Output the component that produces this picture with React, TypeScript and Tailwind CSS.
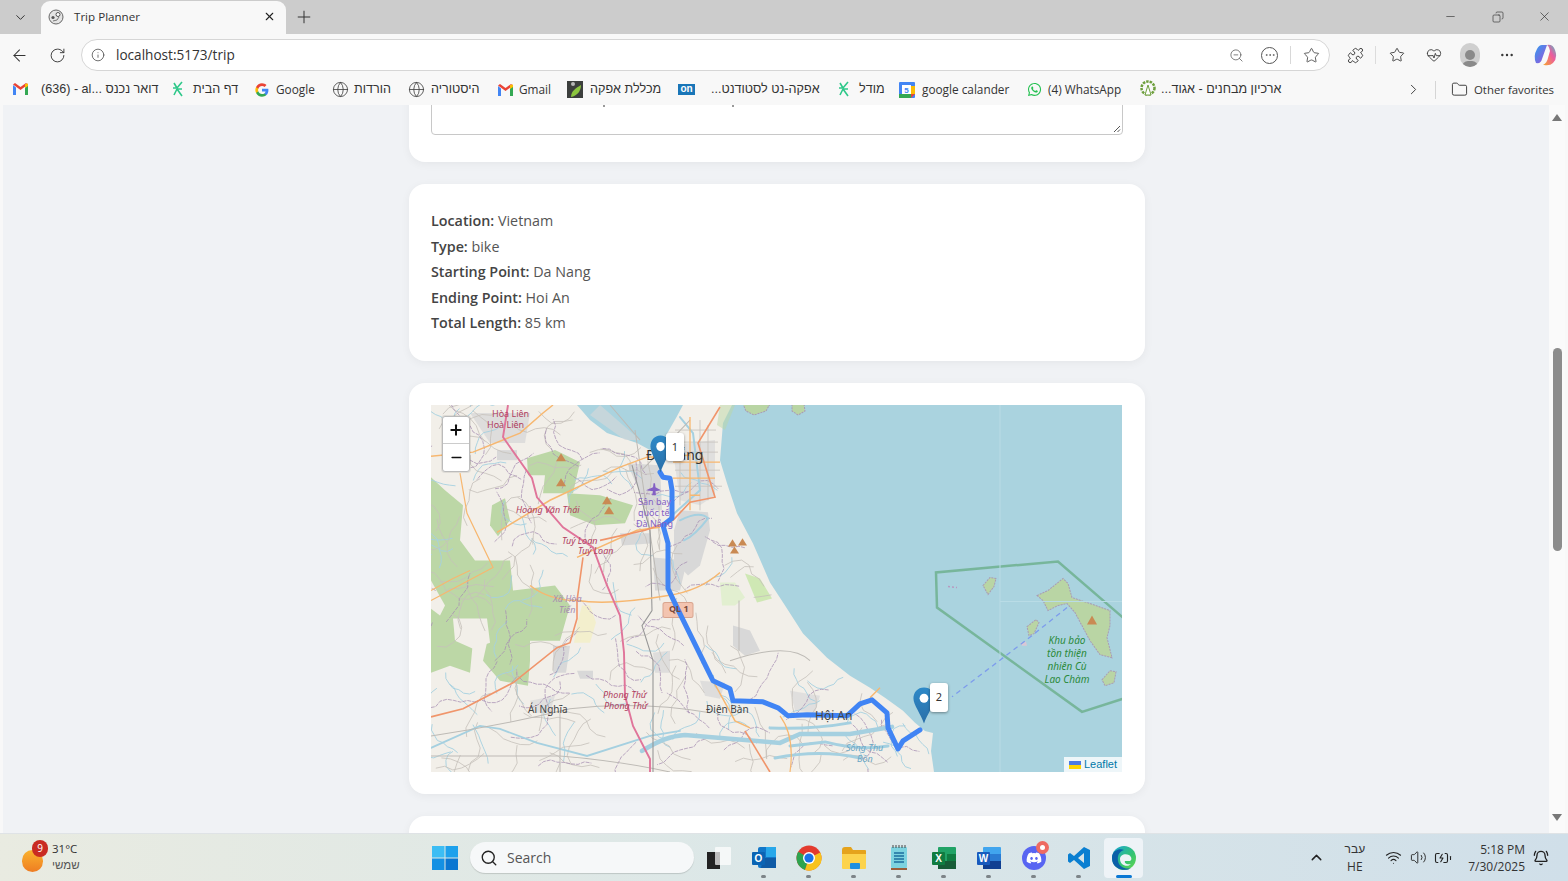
import React from "react";
import { FaWhatsapp, FaDiscord } from "react-icons/fa";
import { Search, ChevronDown, ChevronUp, ChevronRight, ArrowLeft, RotateCw, Info, Plus, X, Minus, Copy, ZoomOut, Star, Puzzle, HeartPulse, Ellipsis, Folder, Globe, Wifi, Volume2, BatteryCharging, BellRing } from "lucide-react";

const Gmail = () => (
  <svg width="15" height="12" viewBox="0 0 15 12" className="shrink-0">
    <path d="M0 2 V12 H3 V4.5 Z" fill="#4285f4" />
    <path d="M12 4.5 V12 H15 V2 Z" fill="#34a853" />
    <path d="M0 1.5 L7.5 7 L15 1.5 L13 0 L7.5 4 L2 0 Z" fill="#ea4335" />
    <path d="M12 1 L15 0.5 V3 L12 5 Z" fill="#fbbc04" />
  </svg>
);
const Moodle = () => (
  <svg width="14" height="16" viewBox="0 0 14 16" className="shrink-0" fill="none" stroke="#2fc88a" strokeWidth="1.6">
    <path d="M11 1 L6 7 H2 M6 8 H11 M6 8 L11 15 M6 8 L3 14 M3 2 L6 7" />
  </svg>
);
const GoogleG = () => (
  <svg width="14" height="14" viewBox="0 0 24 24" className="shrink-0">
    <path d="M23 12.3c0-.8-.1-1.6-.2-2.3H12v4.5h6.2c-.3 1.4-1.1 2.6-2.3 3.4v2.8h3.7c2.1-2 3.4-4.9 3.4-8.4z" fill="#4285f4" />
    <path d="M12 23.5c3.1 0 5.7-1 7.6-2.8l-3.7-2.8c-1 .7-2.3 1.1-3.9 1.1-3 0-5.5-2-6.4-4.7H1.8v2.9c1.9 3.8 5.8 6.3 10.2 6.3z" fill="#34a853" />
    <path d="M5.6 14.3c-.5-1.4-.5-3 0-4.5V6.9H1.8c-1.6 3.2-1.6 6.9 0 10.3z" fill="#fbbc04" />
    <path d="M12 5.1c1.7 0 3.2.6 4.4 1.7l3.3-3.3C17.7 1.7 15.1.5 12 .5 7.6.5 3.7 3 1.8 6.9l3.8 2.9C6.5 7.1 9 5.1 12 5.1z" fill="#ea4335" />
  </svg>
);
const Afeka = () => (
  <svg width="16" height="17" viewBox="0 0 16 17" className="shrink-0">
    <rect width="16" height="17" fill="#3c3f3d" />
    <circle cx="6" cy="3" r="2" fill="#b8b8b8" />
    <path d="M4 16 C4 10 9 7 14 4 C14 10 10 15 4 16 Z" fill="#8cc63f" />
  </svg>
);
const OnBadge = () => (
  <span className="flex h-[11px] w-[17px] shrink-0 items-center justify-center bg-[#1976b8] font-['Liberation_Sans',sans-serif] text-[10px] leading-none font-bold text-white">on</span>
);
const Cal = () => (
  <svg width="16" height="16" viewBox="0 0 16 16" className="shrink-0">
    <rect width="16" height="16" rx="1" fill="#4285f4" />
    <rect x="0" y="12" width="12" height="4" fill="#34a853" />
    <path d="M12 12 H16 L12 16 Z" fill="#ea4335" />
    <rect x="12" y="4" width="4" height="8" fill="#fbbc04" />
    <rect x="3" y="3" width="9" height="9" fill="#fff" />
    <text x="7.5" y="10.5" fontSize="8" fontWeight="700" textAnchor="middle" fill="#4285f4" fontFamily="Liberation Sans">5</text>
  </svg>
);
const Archive = () => (
  <svg width="16" height="18" viewBox="0 0 16 18" className="shrink-0">
    <circle cx="8" cy="8" r="6.5" fill="none" stroke="#6e9f3d" strokeWidth="2.5" strokeDasharray="2.5 1" />
    <path d="M8 5 L11 15 H5 Z" fill="#fff" stroke="#6e9f3d" strokeWidth="1" />
  </svg>
);

const Bm = ({ icon, text, cls, tcls, rtl }: { icon: React.ReactNode; text: string; cls: string; tcls: string; rtl?: boolean }) => (
  <div className={"flex shrink-0 items-center " + cls}>
    {icon}
    <span dir={rtl ? "rtl" : "ltr"} className={"whitespace-nowrap " + (rtl ? "font-['Liberation_Sans',sans-serif] text-[12.6px] " : "") + tcls}>{text}</span>
  </div>
);

const FIcon = () => <Globe size={17} strokeWidth={1.2} className="shrink-0 text-[#444]" />;

const Bookmarks = () => (
  <div className="flex h-[29px] shrink-0 items-center bg-[#f8f8f8] pb-[2px] pl-[13px] text-[11.8px] text-[#333]">
    <Bm cls="w-[158px]" tcls="ml-[13px]" rtl icon={<Gmail />} text={"דואר נכנס ...al\u200F - (636)"} />
    <Bm cls="w-[84px]" tcls="ml-[8px]" rtl icon={<Moodle />} text="דף הבית" />
    <Bm cls="w-[77px]" tcls="ml-[7px]" icon={<GoogleG />} text="Google" />
    <Bm cls="w-[76px]" tcls="ml-[5px]" rtl icon={<FIcon />} text="הורדות" />
    <Bm cls="w-[90px]" tcls="ml-[6px]" rtl icon={<FIcon />} text="היסטוריה" />
    <Bm cls="w-[69px]" tcls="ml-[6px]" icon={<Gmail />} text="Gmail" />
    <Bm cls="w-[111px]" tcls="ml-[7px]" rtl icon={<Afeka />} text="מכללת אפקה" />
    <Bm cls="w-[159px]" tcls="ml-[16px]" rtl icon={<OnBadge />} text="אפקה-נט לסטודנט..." />
    <Bm cls="w-[62px]" tcls="ml-[8px]" rtl icon={<Moodle />} text="מודל" />
    <Bm cls="w-[128px]" tcls="ml-[7px]" icon={<Cal />} text="google calander" />
    <Bm cls="w-[113px]" tcls="ml-[6px]" icon={<FaWhatsapp size={15} className="shrink-0 text-[#25c152]" />} text="(4) WhatsApp" />
    <Bm cls="w-[265px]" tcls="ml-[5px]" rtl icon={<Archive />} text="ארכיון מבחנים - אגוד..." />
    <ChevronRight size={17} strokeWidth={1.3} className="shrink-0 text-[#333]" />
    <div className="ml-[13px] h-[18px] w-px shrink-0 bg-[#d5d5d5]" />
    <Folder size={17} strokeWidth={1.3} className="ml-[15px] shrink-0 text-[#333]" />
    <span className="ml-[6px] whitespace-nowrap text-[11.4px]">Other favorites</span>
  </div>
);

const TabStrip = () => (
  <div className="flex h-[34px] shrink-0 items-end bg-[#cccccc]">
    <div className="flex h-[33px] w-[41px] items-center justify-center">
      <ChevronDown size={15} strokeWidth={1.6} className="text-[#333]" />
    </div>
    <div className="flex h-[33px] w-[245px] items-center rounded-t-[9px] bg-[#f8f8f8] pb-[2px] pl-[7px] pr-[10px]">
      <svg width="16" height="16" viewBox="0 0 16 16" className="shrink-0">
        <circle cx="8" cy="8" r="7" fill="#e4e4e4" stroke="#666" strokeWidth="1" />
        <circle cx="10" cy="5.5" r="2" fill="#fff" stroke="#555" strokeWidth="1" />
        <circle cx="5" cy="8.5" r="1.6" fill="#555" />
        <path d="M5 12 Q10 12 11 8" fill="none" stroke="#777" strokeWidth="1" />
      </svg>
      <span className="ml-[10px] text-[11.6px] text-[#333]">Trip Planner</span>
      <X size={13} strokeWidth={2} className="ml-auto text-[#222]" />
    </div>
    <div className="flex h-[33px] w-[36px] items-center justify-center pb-[2px]">
      <Plus size={20} strokeWidth={1.2} className="text-[#333]" />
    </div>
    <div className="ml-auto flex h-[33px] items-center pb-[2px]">
      <div className="flex w-[48px] justify-center"><Minus size={13} strokeWidth={1.2} className="text-[#333]" /></div>
      <div className="flex w-[47px] justify-center"><Copy size={12} strokeWidth={1.3} className="-scale-x-100 text-[#333]" /></div>
      <div className="flex w-[47px] justify-center"><X size={15} strokeWidth={1.1} className="text-[#333]" /></div>
    </div>
  </div>
);

const Toolbar = () => (
  <div className="flex h-[42px] shrink-0 items-center bg-[#f8f8f8]">
    <div className="flex w-[39px] justify-center"><ArrowLeft size={19} strokeWidth={1.3} className="text-[#333]" /></div>
    <div className="flex w-[36px] justify-center"><RotateCw size={17} strokeWidth={1.3} className="text-[#333]" /></div>
    <div className="ml-[6px] flex h-[32px] w-[1249px] items-center rounded-full border border-[#d6d6d6] bg-white pl-[9px] pr-[9px]">
      <Info size={14} strokeWidth={1.3} className="text-[#444]" />
      <span className="ml-[11px] text-[13.6px] text-[#333]">localhost:5173/trip</span>
      <ZoomOut size={15} strokeWidth={1.2} className="ml-auto text-[#555]" />
      <div className="ml-[17px] flex h-[17px] w-[17px] items-center justify-center rounded-full border border-[#555]">
        <Ellipsis size={12} strokeWidth={1.5} className="text-[#555]" />
      </div>
      <div className="ml-[12px] h-[18px] w-px bg-[#d8d8d8]" />
      <Star size={17} strokeWidth={1.2} className="ml-[12px] text-[#444]" />
    </div>
    <Puzzle size={17} strokeWidth={1.3} className="ml-[17px] text-[#333]" />
    <div className="ml-[11px] h-[18px] w-px bg-[#dcdcdc]" />
    <Star size={16} strokeWidth={1.3} className="ml-[13px] text-[#333]" />
    <HeartPulse size={16} strokeWidth={1.3} className="ml-[21px] text-[#333]" />
    <div className="ml-[18px] flex h-[24px] w-[20px] items-end justify-center overflow-hidden rounded-full bg-[#cfcfcf]">
      <div className="flex flex-col items-center">
        <div className="mb-[1px] h-[10px] w-[10px] rounded-full bg-[#8a8a8a]" />
        <div className="h-[6px] w-[16px] rounded-t-full bg-[#8a8a8a]" />
      </div>
    </div>
    <Ellipsis size={16} strokeWidth={1.6} className="ml-[19px] text-[#333]" />
    <svg width="24" height="24" viewBox="0 0 24 24" className="ml-[18px]">
      <defs>
        <linearGradient id="cp1" x1="0" y1="0" x2="1" y2="1"><stop offset="0" stopColor="#2f9df0" /><stop offset="1" stopColor="#a24fd8" /></linearGradient>
        <linearGradient id="cp2" x1="0" y1="1" x2="1" y2="0"><stop offset="0" stopColor="#f6a72c" /><stop offset="0.6" stopColor="#ec5aa0" /><stop offset="1" stopColor="#49c2c4" /></linearGradient>
      </defs>
      <path d="M9 2 H14 L9 16 Q8 21 3 20 Q0 13 4 6 Q6 2 9 2 Z" fill="url(#cp1)" />
      <path d="M14 2 Q20 1 22 7 Q25 15 20 20 Q17 23 11 22 L10 22 Q14 20 15 15 L17 8 Q16 3 14 2 Z" fill="url(#cp2)" />
    </svg>
  </div>
);

const coastPts: [number, number][] = [[405, 577], [433, 607], [443, 637], [450, 650], [470, 722], [483, 727], [528, 743], [582, 770], [633, 803], [657, 827], [687, 870], [710, 903], [730, 930], [771, 934]];
const coastX = (y: number) => {
  for (let i = 1; i < coastPts.length; i++) {
    const [y0, x0] = coastPts[i - 1];
    const [y1, x1] = coastPts[i];
    if (y <= y1) return x0 + ((y - y0) / (y1 - y0)) * (x1 - x0);
  }
  return 934;
};
const wiggles = (n: number, seed: number, segs: number, step: number) => {
  let s = seed;
  const r = () => {
    s = (s * 16807) % 2147483647;
    return (s - 1) / 2147483646;
  };
  const out: string[] = [];
  for (let i = 0; i < n; i++) {
    let x = 431 + r() * 500;
    let y = 405 + r() * 366;
    let a = r() * 6.28;
    let d = "";
    for (let j = 0; j < segs; j++) {
      if (x > coastX(y) - 3) break;
      d += (j === 0 ? "M" : "L") + x.toFixed(1) + " " + y.toFixed(1) + " ";
      a += (r() - 0.5) * 1.5;
      x += Math.cos(a) * step;
      y += Math.sin(a) * step;
    }
    if (d.includes("L")) out.push(d);
  }
  return out.join("");
};
const grayNet = wiggles(150, 7331, 7, 9);
const purpleNet = wiggles(75, 91177, 9, 7);
const blueNet = wiggles(85, 50021, 8, 6);

const MapArt = () => (
  <svg viewBox="431 405 691 366" preserveAspectRatio="none" className="absolute inset-0 h-full w-full">
    <defs>
      <filter id="bl" x="0" y="0" width="100%" height="100%"><feGaussianBlur stdDeviation="0.4" /></filter>
    </defs>
    <g filter="url(#bl)">
      <rect x="431" y="405" width="691" height="366" fill="#aad3df" />
      {/* mainland */}
      <path fill="#f2efe9" d="M431 405 H577 L590 420 L607 433 L637 443 L650 450 L662 443 L668 432 L676 418 L683 405 H732 L723 423 L720 460 L727 483 L737 513 L753 543 L770 582 L785 605 L803 633 L827 657 L850 675 L870 687 L885 697 L903 710 L915 722 L925 730 L933 732 L931 750 L934 771 H431 Z" />
      {/* islands */}
      <g fill="#b9d5a4" stroke="#a99bb5" strokeWidth="1" strokeDasharray="2 1">
        <path d="M1037 595 L1048 590 L1063 578 L1068 583 L1072 597 L1090 603 L1110 610 L1110 625 L1107 637 L1112 657 L1100 654 L1090 640 L1083 627 L1075 612 L1067 603 L1058 605 L1048 610 L1043 600 Z" />
        <path d="M983 585 L990 577 L996 578 L994 586 L988 594 Z" />
        <path d="M1027 626 L1036 619 L1039 622 L1034 633 L1029 635 Z" />
        <path d="M1102 679 L1110 670 L1116 671 L1114 682 L1105 685 Z" />
        <path d="M792 404 L804 404 L805 411 L798 415 L792 411 Z" />
        <path d="M743 404 H770 L766 411 L754 415 L746 411 Z" />
      </g>
      <path d="M1020 642 L1026 641 L1027 645 L1022 645 Z" fill="#d9c8d6" />
      <path d="M948 586 L957 587" stroke="#b79ac0" strokeWidth="1.5" strokeDasharray="2 2" />
      {/* protected area */}
      <path d="M1123 617 L1058 561 L936 572 L937 607 L1082 711 L1123 698" fill="none" stroke="#6fb08f" strokeWidth="2.5" opacity="0.85" />
      <path d="M1000 405 V771" stroke="#b9dce6" strokeWidth="1" />
      <path d="M1000 601 H1122" stroke="#b9dce6" strokeWidth="1" />
      <path d="M1067 607 L1032 635 L994 664 L952 696" fill="none" stroke="#7d9cec" strokeWidth="1.3" strokeDasharray="5 4" />
      <path d="M1087 624 H1097 L1092 615 Z" fill="#c98a52" />
      {/* green forests */}
      <g fill="#bcd7a6">
        <path d="M431 477 L445 490 L463 505 L460 540 L475 560 L510 560 L513 590 L555 585 L570 605 L560 640 L530 640 L530 660 L528 685 L500 680 L483 660 L487 642 L453 620 L473 640 L470 672 L450 665 L431 672 Z" />
        <path d="M527 458 L555 450 L580 462 L573 493 L543 493 L545 475 L528 475 Z" />
        <path d="M567 493 L600 495 L633 505 L625 523 L595 525 L570 515 Z" />
        <path d="M492 505 L505 498 L510 520 L498 536 L490 525 Z" />
        <path d="M720 405 L735 405 L725 430 L717 425 Z" opacity="0.5" />
      </g>
      <path d="M453 618 L487 618 L490 642 L473 648 L455 640 Z" fill="#f2efe9" />
      <path d="M420 600 L431 580 L445 605 L440 615 Z" fill="#f2efe9" />
      <path d="M720 582 H735 L745 597 L735 605 H722 Z" fill="#e2efd0" />
      <path d="M745 573 L760 578 L772 598 L757 602 Z" fill="#cfe8b4" />
      <path d="M582 605 L590 605 L596 622 L590 642 L574 642 L578 620 Z" fill="#f3efcd" />
      {/* urban */}
      <g fill="#d8d8d8">
        <path d="M627 463 L660 465 L662 510 L648 510 Z" />
        <path d="M672 445 L715 440 L715 495 L700 505 L680 500 Z" opacity="0.7" />
        <path d="M680 510 L708 512 L710 530 L700 565 L688 575 L674 560 L674 530 Z" />
        <path d="M653 557 L687 560 L680 590 L655 590 Z" />
        <path d="M620 533 L650 533 L650 543 L622 545 Z" />
        <path d="M733 625 L750 630 L760 650 L745 655 L733 645 Z" />
        <path d="M553 645 L570 645 L566 672 L553 672 Z" />
        <path d="M577 670 L593 670 L593 678 L580 678 Z" />
        <path d="M653 652 L670 650 L670 672 L655 672 Z" opacity="0.8" />
        <path d="M470 413 L530 413 L525 443 L490 443 Z" opacity="0.8" />
        <path d="M497 450 L517 450 L517 460 L497 460 Z" />
        <path d="M530 700 L555 695 L550 712 L535 712 Z" opacity="0.7" />
        <path d="M700 680 L725 682 L720 698 L705 695 Z" opacity="0.8" />
        <path d="M790 690 L820 695 L815 712 L795 710 Z" opacity="0.7" />
        <path d="M600 405 L640 440 L625 440 L590 415 Z" opacity="0.6" />
      </g>
      {/* texture */}
      <path d={blueNet} fill="none" stroke="#a5d0e0" strokeWidth="0.9" />
      <path d={grayNet} fill="none" stroke="#c5c1ba" strokeWidth="0.8" />
      <path d={purpleNet} fill="none" stroke="#a78fb3" strokeWidth="0.9" strokeDasharray="4 1" opacity="0.85" />
      <path d="M675 430 H716 M675 442 H718 M675 452 H718 M675 470 H720 M675 486 H722 M700 420 V510 M708 425 V500 M680 440 V505" fill="none" stroke="#c5c1ba" strokeWidth="0.8" />
      {/* rivers */}
      <g fill="none" stroke="#a5d0e0" strokeLinecap="round">
        <path d="M431 747 L480 725 L500 728 L537 742 L587 755 L650 735 L680 730" strokeWidth="1.8" />
        <path d="M642 750 Q665 735 685 734 L780 742 L800 733 L850 733 L892 726" strokeWidth="4.5" />
        <path d="M770 727 Q810 729 850 722 M790 745 L825 741 Q860 750 888 745 M775 757 Q820 748 860 757" strokeWidth="3" />
        <path d="M680 417 L693 433 L700 490 L670 517" strokeWidth="2" />
        <path d="M680 520 Q700 510 708 518 Q695 535 684 540" strokeWidth="2" />
      </g>
      {/* gray roads */}
      <g fill="none" stroke="#bdbab5" strokeWidth="1">
        <path d="M431 735 Q500 725 570 708 Q640 700 710 712 M560 710 V771 M739 600 V650 M730 660 Q790 640 810 660" />
        <path d="M635 430 L660 600 M642 470 L690 420 M610 405 L640 440 M431 755 H560 Q620 760 670 771" />
      </g>
      <path d="M632 465 L650 530 L652 610 L642 625 L653 660 L653 771" fill="none" stroke="#979797" strokeWidth="1.1" />
      {/* orange roads */}
      <g fill="none" stroke="#f7b76f" strokeWidth="1.5">
        <path d="M553 405 L543 413 L520 433 L473 452 L431 456" />
        <path d="M460 473 L467 513 L493 567 L431 600" strokeWidth="1.2" />
        <path d="M497 532 L550 500 L620 467 L647 457 L690 455" />
        <path d="M577 557 L637 530 L660 527" />
        <path d="M431 590 L453 578 L470 570" strokeWidth="1.2" />
        <path d="M530 585 Q550 600 577 600 Q610 605 668 595 Q700 590 720 572" />
        <path d="M690 417 L690 510 M673 462 H720 M673 478 H715 M690 495 H700" strokeWidth="1.3" />
        <path d="M713 680 L735 720 L750 727" />
        <path d="M780 715 Q795 735 790 771" strokeWidth="1.2" />
        <path d="M880 687 L870 697" />
      </g>
      <g fill="none" stroke="#f0956b" strokeWidth="1.6">
        <path d="M583 557 L577 600 L577 618 L570 642 L557 647 L513 682 L463 708 L431 716" />
        <path d="M720 407 L698 443 L715 497 L690 502 L673 520 L645 530 L600 540" />
        <path d="M745 730 L770 771" />
      </g>
      {/* pink trunk */}
      <path d="M508 405 L503 437 L532 478 L537 497 L563 527 L593 547 L607 585 L620 615 L624 652 L625 695 L633 725 L650 758 L650 771" fill="none" stroke="#e0749a" strokeWidth="1.9" />
      {/* peaks */}
      <g fill="#c98a52">
        <path d="M556 461 H566 L561 453 Z" /><path d="M556 486 H566 L561 478 Z" />
        <path d="M602 504 H612 L607 496 Z" /><path d="M604 514 H614 L609 506 Z" />
        <path d="M728 546 H737 L732.5 539 Z" /><path d="M738 545 H747 L742.5 538 Z" /><path d="M730 553 H739 L734.5 546 Z" />
      </g>
      <path d="M652 495 L653 491 L646 490 L653 487 L653.5 483 L655 483 L655.5 487 L661 490 L655.5 491 L656 495 Z" fill="#8461c4" />
      {/* QL badge */}
      <rect x="663" y="602" width="30" height="15" rx="2" fill="#f3c4b0" stroke="#d9a58f" />
      {/* route */}
      <path d="M660 472 L663 477 L670 478 L672 490 L672 518 L663 525 L668 543 L668 588 L677 607 L707 668 L713 680 L730 688 L733 700 L763 701 L778 707 L788 715 L807 714 L847 715 L860 703 L872 699 L887 712 L888 727 L898 748 L903 740 L920 729" fill="none" stroke="#3f84f4" strokeWidth="5" strokeLinejoin="round" strokeLinecap="round" />
    </g>
  </svg>
);

const Label = ({ cls, children }: { cls: string; children: React.ReactNode }) => (
  <span className={"absolute whitespace-nowrap leading-none " + cls}>{children}</span>
);

const Pin = ({ cls }: { cls: string }) => (
  <svg viewBox="0 0 25 41" preserveAspectRatio="none" className={"absolute " + cls}>
    <defs>
      <linearGradient id="pinG" x1="0" y1="0" x2="0" y2="1"><stop offset="0" stopColor="#2e89c8" /><stop offset="1" stopColor="#2a6fa8" /></linearGradient>
    </defs>
    <path d="M12.5 0.5 C5 0.5 0.5 6 0.5 12.5 C0.5 20 9 30 12.5 40.5 C16 30 24.5 20 24.5 12.5 C24.5 6 20 0.5 12.5 0.5 Z" fill="url(#pinG)" />
    <circle cx="12.5" cy="12.5" r="5" fill="#fff" />
  </svg>
);

const Tip = ({ cls, n }: { cls: string; n: string }) => (
  <div className={"absolute flex items-center justify-center rounded-[3px] bg-white text-[11px] text-[#333] shadow-[0_1px_3px_rgba(0,0,0,0.4)] " + cls}>{n}</div>
);

const MapView = () => (
  <div className="relative h-[367px] w-[691px] overflow-hidden bg-[#aad3df] font-['Noto_Sans','Liberation_Sans',sans-serif]">
    <MapArt />
    <Label cls="left-[61px] top-[4px] text-[9px] text-[#b0405f]">Hòa Liên</Label>
    <Label cls="left-[56px] top-[15px] text-[9px] text-[#b0405f]">Hoà Liên</Label>
    <Label cls="left-[85px] top-[100px] text-[9px] italic text-[#b0405f]">Hoàng Văn Thái</Label>
    <Label cls="left-[131px] top-[131px] text-[9px] italic text-[#b0405f]">Tuý Loan</Label>
    <Label cls="left-[147px] top-[141px] text-[9px] italic text-[#b0405f]">Tuý Loan</Label>
    <Label cls="left-[122px] top-[189px] text-[9px] italic text-[#a78ab0]">Xã Hòa</Label>
    <Label cls="left-[128px] top-[200px] text-[9px] italic text-[#a78ab0]">Tiến</Label>
    <Label cls="left-[172px] top-[285px] text-[9px] italic text-[#b0405f]">Phong Thử</Label>
    <Label cls="left-[173px] top-[296px] text-[9px] italic text-[#b0405f]">Phong Thử</Label>
    <Label cls="left-[97px] top-[299px] text-[10px] text-[#444]">Ái Nghĩa</Label>
    <Label cls="left-[275px] top-[299px] text-[10px] text-[#444]">Điện Bàn</Label>
    <Label cls="left-[384px] top-[305px] text-[12px] text-[#444]">Hội An</Label>
    <Label cls="left-[415px] top-[338px] text-[9px] italic text-[#6aa6c4]">Sông Thu</Label>
    <Label cls="left-[426px] top-[349px] text-[9px] italic text-[#6aa6c4]">Bồn</Label>
    <Label cls="left-[207px] top-[92px] text-[9px] text-[#8461c4]">Sân bay</Label>
    <Label cls="left-[207px] top-[103px] text-[9px] text-[#8461c4]">quốc tế</Label>
    <Label cls="left-[205px] top-[114px] text-[9px] text-[#8461c4]">Đà Nẵng</Label>
    <Label cls="left-[238px] top-[199px] text-[9px] font-bold text-[#7b4a3a]">QL 1</Label>
    <Label cls="left-[215px] top-[43px] text-[14px] text-[#333]">Đà Nẵng</Label>
    <div className="absolute left-[606px] top-[229px] w-[60px] text-center text-[10px] italic leading-[13px] text-[#2a8a3a]">Khu bảo<br />tồn thiện<br />nhiên Cù<br />Lao Chàm</div>
    <Pin cls="left-[219px] top-[30px] h-[38px] w-[21px]" />
    <Tip cls="left-[235px] top-[28px] h-[28px] w-[18px]" n="1" />
    <Pin cls="left-[482px] top-[282px] h-[37px] w-[22px]" />
    <Tip cls="left-[499px] top-[278px] h-[29px] w-[18px]" n="2" />
    <div className="absolute left-[11px] top-[11px] flex w-[28px] flex-col overflow-hidden rounded-[3px] border border-[#bbb] bg-white text-[#111] shadow-[0_0_0_1px_rgba(0,0,0,0.08)]">
      <div className="flex h-[27px] items-center justify-center border-b border-[#ccc]"><Plus size={16} strokeWidth={3} /></div>
      <div className="flex h-[27px] items-center justify-center"><Minus size={15} strokeWidth={2.4} /></div>
    </div>
    <div className="absolute bottom-0 right-0 flex h-[15px] items-center bg-white/80 px-[5px] font-['Liberation_Sans',sans-serif] text-[11px] text-[#0078a8]">
      <svg width="12" height="8" viewBox="0 0 12 8" className="mr-[3px]"><rect width="12" height="4" fill="#4c7be1" /><rect y="4" width="12" height="4" fill="#ffd500" /></svg>
      Leaflet
    </div>
  </div>
);

const Card = ({ cls, children }: { cls: string; children: React.ReactNode }) => (
  <div className={"w-[736px] shrink-0 rounded-[16px] bg-white shadow-[0_2px_10px_rgba(0,0,0,0.05)] " + cls}>{children}</div>
);

const Row = ({ k, v }: { k: string; v: string }) => (
  <p className="h-[25.6px]"><b className="font-semibold text-[#444]">{k}</b> <span className="text-[#555]">{v}</span></p>
);

const Page = () => (
  <div className="relative flex min-h-0 flex-1 overflow-hidden bg-[#f0f2f5]">
    <div className="flex min-w-0 flex-1 justify-center overflow-hidden pl-[6px] pr-[1px]">
      <div className="-mt-[30px] flex flex-col items-center gap-[22px] font-['Open_Sans',sans-serif] text-[14.3px]">
        <Card cls="h-[87px] px-[22px] pt-[22px]">
          <div className="relative h-[38px] rounded-[4px] border border-[#c8c8c8]">
            <div className="absolute left-[171px] top-[7px] h-[2px] w-[2px] bg-[#999]" />
            <div className="absolute left-[300px] top-[7px] h-[2px] w-[2px] bg-[#999]" />
            <svg width="8" height="8" viewBox="0 0 8 8" className="absolute bottom-[1px] right-[1px]"><path d="M1 7 L7 1 M4.5 7 L7 4.5" stroke="#555" strokeWidth="1" /></svg>
          </div>
        </Card>
        <Card cls="h-[177px] px-[22px] pt-[26px]">
          <Row k="Location:" v="Vietnam" />
          <Row k="Type:" v="bike" />
          <Row k="Starting Point:" v="Da Nang" />
          <Row k="Ending Point:" v="Hoi An" />
          <Row k="Total Length:" v="85 km" />
        </Card>
        <Card cls="h-[411px] p-[22px]">
          <MapView />
        </Card>
        <Card cls="h-[80px]"><span /></Card>
      </div>
    </div>
    <div className="flex w-[16px] shrink-0 flex-col items-center justify-between bg-[#fafafa] pb-[12px] pt-[9px]">
      <div className="h-0 w-0 border-x-[5px] border-b-[7px] border-x-transparent border-b-[#777]" />
      <div className="h-0 w-0 border-x-[5px] border-t-[7px] border-x-transparent border-t-[#777]" />
    </div>
    <div className="w-[3px] shrink-0 bg-[#f8f8f8]" />
    <div className="absolute right-[6px] top-[243px] h-[203px] w-[9px] rounded-full bg-[#8c8c8c]" />
    <div className="absolute inset-y-0 left-0 w-[3px] bg-[#f8f8f8]" />
  </div>
);

const TB = ({ children, dot, active }: { children: React.ReactNode; dot?: boolean; active?: boolean }) => (
  <div className={"relative flex h-[40px] w-[39px] items-center justify-center rounded-[4px] " + (active ? "bg-[#eef3f7]" : "")}>
    {children}
    {dot && <div className="absolute bottom-[0px] h-[3px] w-[5px] rounded-full bg-[#7d8488]" />}
    {active && <div className="absolute bottom-[0px] h-[3px] w-[16px] rounded-full bg-[#0a78d4]" />}
  </div>
);

const Taskbar = () => (
  <div className="relative flex h-[48px] shrink-0 items-center border-t border-[#dfe3e6] bg-gradient-to-r from-[#e9ebe1] via-[#dbe7e8] to-[#d0dfe9] font-['Open_Sans',sans-serif] text-[#333]">
    <div className="absolute left-[22px] top-[4px] flex items-center">
      <div className="mt-[10px] h-[22px] w-[21px] rounded-full bg-gradient-to-b from-[#f9b22e] to-[#ee7d23]" />
      <div className="absolute left-[10px] top-[2px] flex h-[17px] w-[16px] items-center justify-center rounded-full bg-[#c92a22] text-[10px] text-white">9</div>
      <div className="ml-[9px] flex flex-col text-[11.5px] leading-[17px]">
        <span className="mt-[2px]">31°C</span>
        <span dir="rtl" className="text-left font-['Liberation_Sans',sans-serif] text-[#555]">שמשי</span>
      </div>
    </div>
    <div className="mx-auto flex h-full items-center pl-[7px]">
      <svg width="26" height="24" viewBox="0 0 26 24" className="mr-[12px]">
        <rect width="12.5" height="11.5" fill="#3cbdf4" /><rect x="13.5" width="12.5" height="11.5" fill="#1ea1ec" />
        <rect y="12.5" width="12.5" height="11.5" fill="#1390e3" /><rect x="13.5" y="12.5" width="12.5" height="11.5" fill="#0a76d1" />
      </svg>
      <div className="flex h-[31px] w-[224px] items-center rounded-full bg-[#f6f8f9] pl-[10px] shadow-[0_1px_1px_rgba(0,0,0,0.15)]">
        <Search size={18} strokeWidth={1.8} className="text-[#222]" />
        <span className="ml-[9px] text-[14px] text-[#555]">Search</span>
      </div>
      <div className="ml-[5px] flex items-center gap-[6px]">
        <TB>
          <div className="relative h-[22px] w-[24px]">
            <div className="absolute bottom-0 left-0 h-[17px] w-[13px] bg-[#222]" />
            <div className="absolute right-0 top-0 h-[18px] w-[16px] rounded-[1px] bg-white/70" />
          </div>
        </TB>
        <TB dot>
          <svg width="26" height="24" viewBox="0 0 26 24">
            <rect x="7" y="1" width="18" height="21" rx="2" fill="#1277c9" /><path d="M12 12 L25 12 V22 H10 Z" fill="#0f5ba6" /><rect x="15" y="1" width="10" height="10" fill="#28a8ea" />
            <rect x="1" y="6" width="13" height="13" rx="1" fill="#0a64b4" /><text x="7.5" y="16" fontSize="10" fontWeight="700" fill="#fff" textAnchor="middle" fontFamily="Liberation Sans">O</text>
          </svg>
        </TB>
        <TB dot>
          <svg width="26" height="26" viewBox="0 0 26 26">
            <circle cx="13" cy="13" r="12.5" fill="#e33b2e" />
            <path d="M13 13 L2.2 6.8 A12.5 12.5 0 0 0 9 24.9 Z" fill="#2ea44f" />
            <path d="M24.3 7.6 A12.5 12.5 0 0 1 9 24.9 L13 13 Z" fill="#f8c31c" />
            <circle cx="13" cy="13" r="6" fill="#fff" /><circle cx="13" cy="13" r="4.6" fill="#1a73e8" />
          </svg>
        </TB>
        <TB dot>
          <svg width="26" height="24" viewBox="0 0 26 24">
            <path d="M1 4 Q1 1 4 1 H10 L12 4 H24 Q25 4 25 5 V10 H1 Z" fill="#e5a31c" />
            <path d="M1 8 H25 V22 Q25 23 24 23 H2 Q1 23 1 22 Z" fill="#fcd34d" />
            <rect x="9" y="17" width="10" height="6" rx="1" fill="#1d8fe0" />
          </svg>
        </TB>
        <TB dot>
          <svg width="20" height="26" viewBox="0 0 20 26">
            <rect x="2" y="2" width="16" height="21" rx="1" fill="#7dd3e0" />
            <rect x="2" y="23" width="16" height="2" fill="#9b5f3b" />
            <path d="M5 8 H15 M5 11 H15 M5 14 H15 M5 17 H15" stroke="#1c6f9e" strokeWidth="1.3" />
            <path d="M4 0 V3 M7 0 V3 M10 0 V3 M13 0 V3 M16 0 V3" stroke="#444" strokeWidth="1" />
          </svg>
        </TB>
        <TB dot>
          <svg width="26" height="24" viewBox="0 0 26 24">
            <rect x="7" y="1" width="18" height="22" rx="1" fill="#21a366" /><rect x="16" y="8" width="9" height="7" fill="#107c41" /><rect x="7" y="15" width="18" height="8" fill="#185c37" />
            <rect x="1" y="6" width="13" height="13" rx="1" fill="#107c41" /><text x="7.5" y="16" fontSize="10" fontWeight="700" fill="#fff" textAnchor="middle" fontFamily="Liberation Sans">X</text>
          </svg>
        </TB>
        <TB dot>
          <svg width="26" height="24" viewBox="0 0 26 24">
            <rect x="7" y="1" width="18" height="22" rx="1" fill="#41a5ee" /><rect x="7" y="8" width="18" height="7" fill="#2b7cd3" /><rect x="7" y="15" width="18" height="8" fill="#103f91" />
            <rect x="1" y="6" width="13" height="13" rx="1" fill="#185abd" /><text x="7.5" y="16" fontSize="10" fontWeight="700" fill="#fff" textAnchor="middle" fontFamily="Liberation Sans">W</text>
          </svg>
        </TB>
        <TB dot>
          <div className="relative flex h-[24px] w-[24px] items-center justify-center rounded-full bg-[#5865f2]">
            <FaDiscord size={16} className="text-white" />
            <div className="absolute -right-[3px] -top-[5px] flex h-[13px] w-[13px] items-center justify-center rounded-full bg-[#ee6a62]"><div className="h-[5px] w-[5px] rounded-full bg-white" /></div>
          </div>
        </TB>
        <TB dot>
          <svg width="24" height="24" viewBox="0 0 24 24">
            <path d="M17 1 L23 4 V20 L17 23 L7 14 L3 17 L1 15.5 V8.5 L3 7 L7 10 Z M17 7 L11 12 L17 17 Z" fill="#0a7fd1" fillRule="evenodd" />
          </svg>
        </TB>
        <TB active>
          <svg width="26" height="26" viewBox="0 0 26 26">
            <defs>
              <linearGradient id="edg" x1="0" y1="0" x2="1" y2="1"><stop offset="0" stopColor="#1ba6d8" /><stop offset="0.6" stopColor="#34c471" /><stop offset="1" stopColor="#6bd84d" /></linearGradient>
            </defs>
            <circle cx="13" cy="13" r="12" fill="url(#edg)" />
            <path d="M1 13 C1 5 9 3 13 5 C9 6 6 10 7 16 C8 22 15 25 20 23 C15 27 1 25 1 13 Z" fill="#0b5fa8" />
            <path d="M9 14 C9 10 14 8 18 10 C21 12 21 15 19 16 H14 C13 18 16 20 20 19 C16 23 9 20 9 14 Z" fill="#eef3f7" />
          </svg>
        </TB>
      </div>
    </div>
    <div className="absolute right-[19px] top-0 flex h-full items-center">
      <ChevronUp size={17} strokeWidth={2} className="mr-[20px] text-[#222]" />
      <div className="mr-[20px] flex flex-col items-center text-[12px] leading-[17px]">
        <span dir="rtl" className="font-['Liberation_Sans',sans-serif]">עבר</span>
        <span>HE</span>
      </div>
      <Wifi size={17} strokeWidth={1.5} className="mr-[8px] text-[#222]" />
      <Volume2 size={17} strokeWidth={1.3} className="mr-[7px] text-[#222]" />
      <BatteryCharging size={18} strokeWidth={1.5} className="mr-[16px] text-[#222]" />
      <div className="mr-[8px] flex flex-col items-end text-[12px] leading-[17px]">
        <span>5:18 PM</span>
        <span>7/30/2025</span>
      </div>
      <BellRing size={16} strokeWidth={2} className="text-[#222]" />
    </div>
  </div>
);

export default function App() {
  return (
    <div className="flex h-[881px] w-[1568px] flex-col overflow-hidden bg-[#f8f8f8] font-['Open_Sans','Liberation_Sans',sans-serif]">
      <TabStrip />
      <Toolbar />
      <Bookmarks />
      <Page />
      <Taskbar />
    </div>
  );
}
